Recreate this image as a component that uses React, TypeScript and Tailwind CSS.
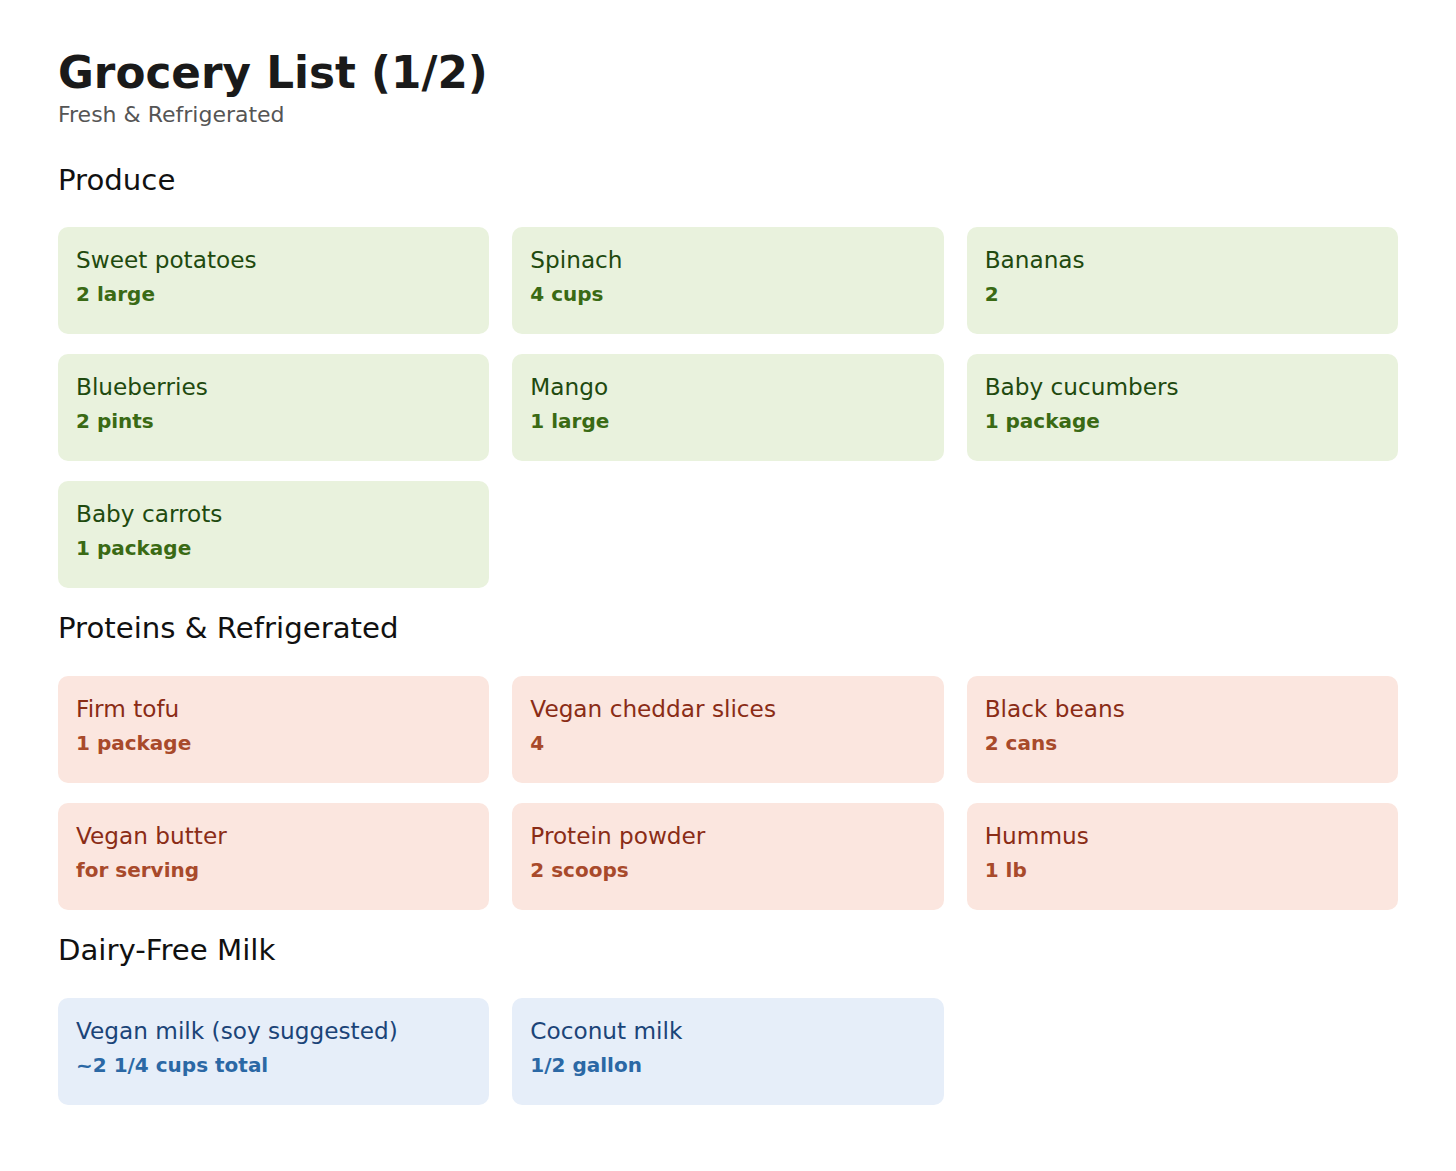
import React from "react";

type Item = { name: string; qty: string };

const produce: Item[] = [
  { name: "Sweet potatoes", qty: "2 large" },
  { name: "Spinach", qty: "4 cups" },
  { name: "Bananas", qty: "2" },
  { name: "Blueberries", qty: "2 pints" },
  { name: "Mango", qty: "1 large" },
  { name: "Baby cucumbers", qty: "1 package" },
  { name: "Baby carrots", qty: "1 package" },
];

const proteins: Item[] = [
  { name: "Firm tofu", qty: "1 package" },
  { name: "Vegan cheddar slices", qty: "4" },
  { name: "Black beans", qty: "2 cans" },
  { name: "Vegan butter", qty: "for serving" },
  { name: "Protein powder", qty: "2 scoops" },
  { name: "Hummus", qty: "1 lb" },
];

const milk: Item[] = [
  { name: "Vegan milk (soy suggested)", qty: "~2 1/4 cups total" },
  { name: "Coconut milk", qty: "1/2 gallon" },
];

type Theme = { card: string; name: string; qty: string };

const green: Theme = { card: "bg-[#e9f2dd]", name: "text-[#1f4a0f]", qty: "text-[#3a6a14]" };
const red: Theme = { card: "bg-[#fbe6df]", name: "text-[#8a2c16]", qty: "text-[#a84a2b]" };
const blue: Theme = { card: "bg-[#e6eef9]", name: "text-[#1b4478]", qty: "text-[#2b68a5]" };

function Section({ title, items, theme, first }: { title: string; items: Item[]; theme: Theme; first?: boolean }) {
  return (
    <section className={first ? "mt-[35px]" : "mt-[23px]"}>
      <h2 className="text-[29.2px] leading-[34px] font-normal text-[#111111]">{title}</h2>
      <div className={`${first ? "mt-[30px]" : "mt-[31px]"} grid grid-cols-3 gap-x-[23px] gap-y-[20px]`}>
        {items.map((it) => (
          <div key={it.name} className={`${theme.card} rounded-[10px] h-[107px] px-[18px] pt-[19px]`}>
            <div className={`${theme.name} text-[23.2px] leading-[27px]`}>{it.name}</div>
            <div className={`${theme.qty} text-[20px] leading-[23px] font-bold mt-[10px]`}>{it.qty}</div>
          </div>
        ))}
      </div>
    </section>
  );
}

export default function App() {
  return (
    <div
      className="min-h-[1171px] bg-white px-[58px] pt-[47px] pb-[60px]"
      style={{ fontFamily: '"DejaVu Sans", Verdana, sans-serif' }}
    >
      <h1 className="text-[43.7px] leading-[51px] font-bold text-[#1a1a1a]">Grocery List (1/2)</h1>
      <div className="mt-[4px] text-[22px] leading-[26px] text-[#555555]">Fresh &amp; Refrigerated</div>
      <Section title="Produce" items={produce} theme={green} first />
      <Section title="Proteins & Refrigerated" items={proteins} theme={red} />
      <Section title="Dairy-Free Milk" items={milk} theme={blue} />
    </div>
  );
}
